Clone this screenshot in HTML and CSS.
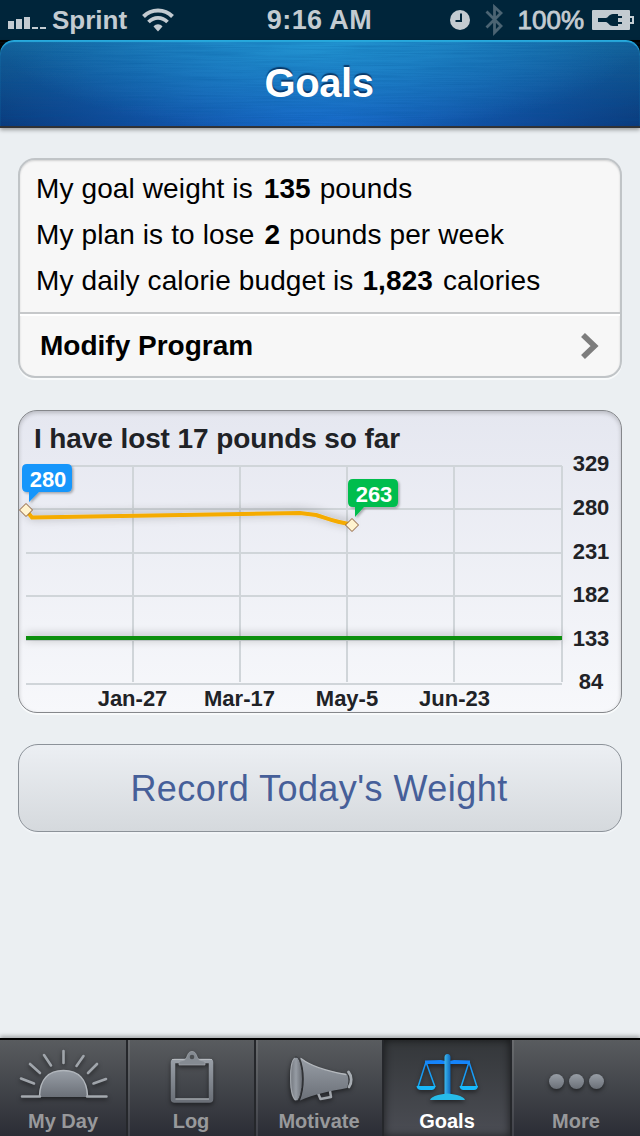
FILE: index.html
```html
<!DOCTYPE html>
<html lang="en">

<head>
    <meta charset="utf-8">
    <meta name="viewport" content="width=device-width, initial-scale=1.0">
    <title>Goals</title>
    <link rel="stylesheet" href="styles.css">
</head>

<body>
    <div class="statusbar">
        <div class="status-left">
            <svg class="signal" width="38" height="12" viewBox="0 0 38 12">
                <path d="M0 4h6v8H0zM8 2h6v10H8zM16 0h6v12h-6zM24 10h6v2h-6zM32 10h6v2h-6z" />
            </svg>
            <span class="carrier">Sprint</span>
            <svg class="wifi" width="32" height="24" viewBox="0 0 32 24">
                <path d="M1.5 8.500C9.500 0.500 22.500 0.500 30.500 8.500" fill="none" stroke="#c3cbd1" stroke-width="4" />
                <path d="M6.500 14C12 8.500 20 8.500 25.500 14" fill="none" stroke="#c3cbd1" stroke-width="3.800" />
                <path d="M11.500 18.500C14 15.500 18 15.500 20.500 18.500L16 23.500z" />
            </svg>
        </div>
        <span class="clock">9:16 AM</span>
        <div class="status-right">
            <svg class="alarm" width="20" height="20" viewBox="0 0 20 20">
                <circle cx="10" cy="10" r="10" />
                <path d="M11 3.500V11H5.500" fill="none" stroke="#00253a" stroke-width="2" />
            </svg>
            <svg class="bluetooth" width="18" height="32" viewBox="0 0 18 32">
                <path d="M1.500 7.500L16 22L9.500 28.500V3L16 9L1.500 23.500" fill="none" stroke="#4b6473" stroke-width="2.800" />
            </svg>
            <span class="percent">100%</span>
            <svg class="battery" width="42" height="20" viewBox="0 0 42 20">
                <path d="M1 0h36a1 1 0 0 1 1 1v18a1 1 0 0 1-1 1H1a1 1 0 0 1-1-1V1a1 1 0 0 1 1-1z" />
                <path d="M37 7h4v6h-4" fill="none" stroke="#c3cbd1" stroke-width="2" />
                <path d="M6 8h8c2 0 3-4 7-4h5v2h4v2h-4v4h4v2h-4v2h-5c-4 0-5-4-7-4H6z" fill="#00253a" />
            </svg>
        </div>
    </div>

    <div class="header-back">
        <header class="header">
            <svg class="brushed" width="640" height="86">
                <filter id="metal">
                    <feTurbulence type="fractalNoise" baseFrequency="0.012 0.7" numOctaves="3" seed="4" />
                    <feColorMatrix values="0 0 0 0 0  0 0 0 0 0.08  0 0 0 0 0.3  1.600 0 0 0 -0.600" />
                </filter>
                <rect width="640" height="86" filter="url(#metal)" />
            </svg>
            <h1>Goals</h1>
        </header>
    </div>

    <main>
        <section class="card plan">
            <div class="facts">
                <p class="weight">My goal weight is <b>135</b> pounds</p>
                <p class="pace">My plan is to lose <b>2</b> pounds per week</p>
                <p class="budget">My daily calorie budget is <b>1,823</b> calories</p>
            </div>
            <a class="modify">
                <span>Modify Program</span>
                <svg width="19" height="26" viewBox="0 0 19 26">
                    <path d="M2 2L13.500 13L2 24" fill="none" stroke="#7d7d7d" stroke-width="5.600" />
                </svg>
            </a>
        </section>

        <section class="card graph">
            <h2>I have lost 17 pounds so far</h2>
            <svg class="chart" width="602" height="248" viewBox="19 464 602 248">
                <defs>
                    <filter id="lineShadow" filterUnits="userSpaceOnUse" x="19" y="464" width="602" height="248">
                        <feDropShadow dx="0" dy="-1" stdDeviation="5" flood-color="#000" flood-opacity="0.350" />
                    </filter>
                    <filter id="flagShadow" x="-20%" y="-20%" width="150%" height="150%">
                        <feDropShadow dx="1.500" dy="1.500" stdDeviation="1" flood-color="#000" flood-opacity="0.300" />
                    </filter>
                </defs>
                <path class="grid" d="M26 466H562M26 509H562M26 553H562M26 596H562M26 640H562M26 684H562" />
                <path class="grid" d="M133 465V682M240 465V682M347 465V682M454 465V682M562 466V682" />
                <path class="goal-line" d="M26 638H562" filter="url(#lineShadow)" />
                <path class="weight-line" d="M26 510L32 517.500L300 513L316 515C326 518 334 522 352 524.500" filter="url(#lineShadow)" />
                <g class="marker">
                    <path d="M26 503.500L32.500 510L26 516.500L19.500 510z" />
                    <path d="M352 518.500L358.500 525L352 531.500L345.500 525z" />
                </g>
                <path d="M27 464H67Q72 464 72 469V487Q72 492 67 492H39L29 502V492H27Q22 492 22 487V469Q22 464 27 464z" fill="#1996fb" filter="url(#flagShadow)" />
                <path d="M353 479H393Q398 479 398 484V502Q398 507 393 507H364L355 517V507H353Q348 507 348 502V484Q348 479 353 479z" fill="#05bd4e" filter="url(#flagShadow)" />
                <g class="flag-text">
                    <text x="48" y="487">280</text>
                    <text x="374" y="502">263</text>
                </g>
                <g class="axis">
                    <text x="591" y="471">329</text>
                    <text x="591" y="515">280</text>
                    <text x="591" y="559">231</text>
                    <text x="591" y="602">182</text>
                    <text x="591" y="646">133</text>
                    <text x="591" y="689">84</text>
                    <text x="132.500" y="706">Jan-27</text>
                    <text x="239.500" y="706">Mar-17</text>
                    <text x="347" y="706">May-5</text>
                    <text x="454.500" y="706">Jun-23</text>
                </g>
            </svg>
        </section>

        <button class="record">Record Today's Weight</button>
    </main>

    <nav class="tabs">
        <svg width="0" height="0" class="defs">
            <linearGradient id="steel" x1="0" y1="0" x2="0" y2="1">
                <stop offset="0" stop-color="#989ea6" />
                <stop offset="1" stop-color="#6b7078" />
            </linearGradient>
            <linearGradient id="horn" x1="0" y1="0" x2="1" y2="0">
                <stop offset="0" stop-color="#6c7077" />
                <stop offset="0.500" stop-color="#969ca4" />
                <stop offset="1" stop-color="#676b72" />
            </linearGradient>
            <linearGradient id="blue" gradientUnits="userSpaceOnUse" x1="0" y1="14" x2="0" y2="60">
                <stop offset="0" stop-color="#1582fb" />
                <stop offset="1" stop-color="#17bdf2" />
            </linearGradient>
            <linearGradient id="post" gradientUnits="userSpaceOnUse" x1="60" y1="0" x2="67" y2="0">
                <stop offset="0" stop-color="#3fc0f5" />
                <stop offset="1" stop-color="#0b62b8" />
            </linearGradient>
        </svg>
        <a class="tab">
            <svg width="126" height="64" viewBox="0 0 126 64">
                <path d="M39 57C40 40 48 30.500 63.500 30.500S87 40 88 57z" fill="url(#steel)" />
                <path d="M39.500 56C40 40 48 30.500 63.500 30.500S87 40 87.500 56" fill="none" stroke="#b1b6bc" stroke-width="1.500" />
                <path d="M22 56.500H40M87 56.500H106.500" stroke="#a4a9af" stroke-width="2.500" stroke-linecap="round" />
                <path d="M63.500 11V23M44 15L51 25.500M30 24L40 33M21 38.500L34 43.500M83.500 16L76.500 26M97 24L88 33M106 39L93.500 43.500" stroke="#a0a5ab" stroke-width="2.600" stroke-linecap="round" />
            </svg>
            <span>My Day</span>
        </a>
        <a class="tab">
            <svg width="126" height="64" viewBox="0 0 126 64">
                <rect x="45" y="21" width="38" height="39.500" rx="1.500" fill="none" stroke="url(#steel)" stroke-width="4.500" />
                <path d="M47.500 59H81M44 19.500H84" stroke="#b5b9be" stroke-width="1.200" />
                <path d="M51 25V21.500L56.500 20C60 17.500 59 11.500 64 11.500S68 17.500 71.500 20L77 21.500V25z" fill="#858b92" stroke="#a3a8ae" stroke-width="0.700" />
                <circle cx="64" cy="17" r="2.300" fill="#4c4f52" />
            </svg>
            <span>Log</span>
        </a>
        <a class="tab">
            <svg width="126" height="64" viewBox="0 0 126 64">
                <path d="M62 53L64.500 59L75 57L74 51" fill="none" stroke="#a0a5ab" stroke-width="2.500" stroke-linejoin="round" />
                <path d="M44 17.500C56 27 70 31 91 34C93 38 93 43 91 48C75 51 58 54 44 60.500C49 48 49 30 44 17.500z" fill="url(#steel)" />
                <path d="M45 18.500C56 27 70 31 90 34.500" fill="none" stroke="#b4b8bd" stroke-width="1.300" />
                <ellipse cx="40" cy="39" rx="6.500" ry="22" fill="url(#horn)" stroke="#303236" stroke-width="1" />
                <path d="M39 18C33 22 33 56 40 60" fill="none" stroke="#a2a7ad" stroke-width="1.200" />
                <path d="M92.500 32C96 36 96 43 93 47" fill="none" stroke="#a7acb2" stroke-width="2.800" stroke-linecap="round" />
            </svg>
            <span>Motivate</span>
        </a>
        <a class="tab active">
            <svg width="126" height="64" viewBox="0 0 126 64">
                <path d="M41 20.500L57 20Q63.500 22 70 20L86 20.500V24H41z" fill="#1584fb" />
                <path d="M42 22L34 47M42 22L51 47M85 22L77 47M85 22L93 47" stroke="url(#blue)" stroke-width="1.500" />
                <path d="M32.500 46H51.500Q51 50 47.500 50H37Q33 50 32.500 46zM75.500 46H94Q93.500 50 90 50H79.500Q76 50 75.500 46z" fill="#18b8fa" />
                <path d="M60.500 55V17.500Q60.500 14 63.500 14T66.500 17.500V55z" fill="url(#post)" />
                <path d="M46 60Q47 57 54 55Q60 53.500 63.500 53.500T73 55Q80 57 81 60z" fill="#27bce9" />
            </svg>
            <span>Goals</span>
        </a>
        <a class="tab">
            <svg width="126" height="64" viewBox="0 0 126 64">
                <g fill="url(#steel)">
                    <circle cx="44.500" cy="41.500" r="7.500" />
                    <circle cx="64.500" cy="41.500" r="7.500" />
                    <circle cx="84.500" cy="41.500" r="7.500" />
                </g>
            </svg>
            <span>More</span>
        </a>
    </nav>
</body>

</html>
```
FILE: styles.css
```css
* {
    box-sizing: border-box;
}

body {
    margin: 0;
    width: 640px;
    height: 1136px;
    display: flex;
    flex-direction: column;
    overflow: hidden;
    background-color: #ebeff2;
    font-family: "Liberation Sans", Arial, sans-serif;
}

h1, h2, p {
    margin: 0;
}

svg {
    display: block;
    flex: none;
}

/* status bar */
.statusbar {
    height: 40px;
    flex: none;
    display: grid;
    grid-template-columns: 1fr auto 1fr;
    align-items: center;
    background-color: #00253a;
    color: #c3cbd1;
    fill: #c3cbd1;
    font-size: 26px;
    font-weight: bold;
    padding: 0 6px 0 8px;
}

.status-left,
.status-right {
    display: flex;
    align-items: center;
}

.status-right {
    justify-content: flex-end;
}

.signal {
    margin: 6px 6px 0 0;
}

.wifi {
    margin-left: 15px;
}

.clock {
    font-size: 27px;
    letter-spacing: 0.4px;
    margin-right: 3px;
}

.bluetooth {
    margin: 0 15px;
}

.percent {
    font-weight: normal;
    -webkit-text-stroke: 0.8px #c3cbd1;
}

.battery {
    margin-left: 8px;
}

/* title bar */
.header-back {
    height: 88px;
    flex: none;
    z-index: 1;
    background: linear-gradient(#000 20px, #303236 20px);
    box-shadow: 0 2px 4px rgba(0, 0, 0, 0.35);
}

.header {
    height: 86px;
    display: flex;
    justify-content: center;
    position: relative;
    border-radius: 14px 14px 0 0;
    background: radial-gradient(ellipse 320px 95px at 50% 0, rgba(38, 165, 222, 0.75), rgba(38, 165, 222, 0)),
        radial-gradient(ellipse 360px 130px at 50% 100%, rgba(25, 108, 212, 0.9), rgba(25, 108, 212, 0)),
        linear-gradient(#14649d, #093573);
    box-shadow: inset 0 2px 1px #27a9dc;
}

.brushed {
    position: absolute;
    top: 2px;
    left: 0;
    height: 84px;
    opacity: 0.28;
}

.header h1 {
    position: relative;
    left: -1px;
    color: #fff;
    font-size: 40px;
    letter-spacing: -0.4px;
    line-height: 86px;
    text-shadow: 0 -2px 1px rgba(0, 30, 70, 0.7);
}

/* cards */
main {
    flex: 1;
    padding: 30px 18px 0;
}

.card {
    border-radius: 17px;
}

.plan {
    height: 220px;
    border: 2px solid #c0c4c7;
    background-color: #f7f7f7;
    box-shadow: inset 0 1px 2px rgba(0, 0, 0, 0.15), 0 2px 0 #f8fafb;
}

.facts {
    height: 154px;
    padding: 6px 16px 0;
    border-bottom: 2px solid #c6c8ca;
    font-size: 28px;
    line-height: 46px;
    letter-spacing: 0.12px;
    white-space: nowrap;
}

.weight b {
    margin: 0 1px 0 3px;
}

.pace b {
    margin: 0 1px 0 2px;
}

.budget b {
    margin: 0 2px 0 1px;
}

.modify {
    height: 62px;
    padding: 2px 20px 0;
    display: flex;
    align-items: center;
    justify-content: space-between;
    box-shadow: inset 0 2px 0 #fff;
    border-radius: 0 0 15px 15px;
    font-size: 28px;
    font-weight: bold;
}

.graph {
    height: 303px;
    margin-top: 32px;
    border: 1px solid #85878b;
    border-radius: 19px;
    background: linear-gradient(#e5e7f0, #f7f8fb);
    box-shadow: inset 0 2px 4px rgba(0, 0, 0, 0.2), 0 2px 0 #f8fafb;
}

.graph h2 {
    height: 53px;
    padding-left: 15px;
    color: #202226;
    font-size: 28px;
    letter-spacing: -0.1px;
    line-height: 55px;
}

.chart {
    overflow: visible;
}

.grid {
    fill: none;
    stroke: #d0d5d9;
    stroke-width: 2;
}

.goal-line {
    stroke: #088f0d;
    stroke-width: 4;
}

.weight-line {
    fill: none;
    stroke: #f5ab00;
    stroke-width: 4;
}

.marker {
    fill: #fff3cf;
    stroke: #8a5a35;
}

.axis,
.flag-text {
    font-size: 22px;
    font-weight: bold;
    text-anchor: middle;
}

.axis {
    fill: #202226;
}

.flag-text {
    fill: #fff;
}

.record {
    display: block;
    width: 100%;
    height: 88px;
    margin-top: 31px;
    border: 1px solid #8c9299;
    border-radius: 20px;
    background: linear-gradient(#eceff3, #d5d9dd);
    box-shadow: 0 2px 0 #f1f4f7;
    color: #465f99;
    font-family: inherit;
    font-size: 36px;
    letter-spacing: 0.45px;
    padding: 2px 2px 0 0;
}

/* tab bar */
.tabs {
    height: 98px;
    flex: none;
    display: grid;
    grid-template-columns: repeat(5, 1fr);
    border-top: 2px solid #000;
    background: linear-gradient(#595c5f, #2b2d35);
    box-shadow: 0 -2px 4px rgba(0, 0, 0, 0.3);
}

.defs {
    position: absolute;
}

.tab {
    height: 96px;
    border-right: 2px solid #25272b;
    box-shadow: inset 2px 0 0 rgba(255, 255, 255, 0.1);
    color: #98999b;
    font-size: 20px;
    font-weight: bold;
    line-height: 34px;
    text-align: center;
}

.tab:first-of-type {
    box-shadow: none;
}

.tab:last-of-type {
    border-right: 0;
}

.tab svg {
    filter: drop-shadow(0 2px 2px rgba(0, 0, 0, 0.5));
}

.tab.active {
    color: #fff;
    background: linear-gradient(#34373a, #4b4d54);
    box-shadow: inset 0 0 8px rgba(0, 0, 0, 0.6);
}
```
